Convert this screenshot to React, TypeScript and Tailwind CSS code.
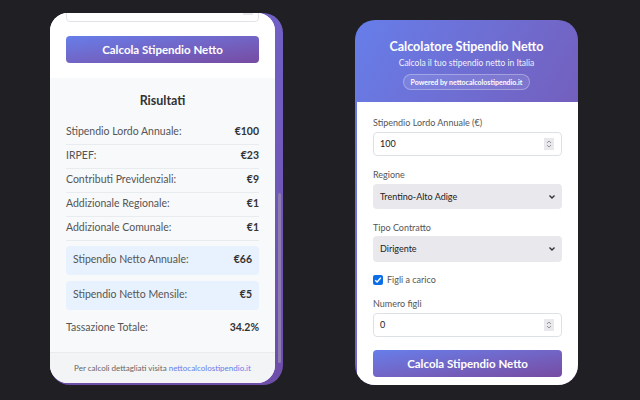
import React from 'react'

const font = { fontFamily: 'Lato, "Noto Sans", sans-serif' }

const rows = [
   { label: 'Stipendio Lordo Annuale:', value: '€100' },
   { label: 'IRPEF:', value: '€23' },
   { label: 'Contributi Previdenziali:', value: '€9' },
   { label: 'Addizionale Regionale:', value: '€1' },
   { label: 'Addizionale Comunale:', value: '€1' },
]

const Spinner = () => (
   <div className="flex h-[12px] w-[10px] flex-col items-center justify-center bg-[#e9e9ed]">
      <svg width="6" height="10" viewBox="0 0 6 10" fill="none" stroke="#8a8a8a" strokeWidth="0.9">
         <path d="M1 4 L3 2 L5 4" />
         <path d="M1 6 L3 8 L5 6" />
      </svg>
   </div>
)

const Chevron = () => (
   <svg width="8" height="6" viewBox="0 0 8 6" fill="none" stroke="#333" strokeWidth="1.4">
      <path d="M1.5 1.5 L4 4 L6.5 1.5" />
   </svg>
)

const GradientButton = ({ className = '' }: { className?: string }) => (
   <div
      className={`flex h-[27px] shrink-0 items-center justify-center rounded-[4px] bg-gradient-to-br from-[#667eea] to-[#764ba2] text-[11.5px] font-bold text-white ${className}`}
   >
      Calcola Stipendio Netto
   </div>
)

const ResultsCard = () => (
   <div className="flex h-[372px] w-[233px] shrink-0 rounded-[20px] bg-gradient-to-b from-[#7160c6] to-[#6d4ea9] pb-[2px]">
      <div className="flex w-[225px] flex-col overflow-hidden rounded-[18px] bg-white">
         <div className="bg-white px-[16px] pb-[15px]">
            <div className="-mt-[17px] flex h-[26px] items-center justify-end rounded-[4px] border border-[#dfe3e8] pr-[5px]">
               <Spinner />
            </div>
            <div className="mt-[14px]">
               <GradientButton />
            </div>
         </div>
         <div className="flex flex-1 flex-col bg-[#f8f9fb] px-[16px] pt-[14px]">
            <div className="text-center text-[12.5px] font-bold text-[#333]">Risultati</div>
            <div className="mt-[10px] flex flex-col">
               {rows.map((r) => (
                  <div
                     key={r.label}
                     className="flex h-[24px] items-center justify-between border-b border-[#e9ecef] text-[10.5px]"
                  >
                     <span className="text-[#555]">{r.label}</span>
                     <span className="font-bold text-[#333]">{r.value}</span>
                  </div>
               ))}
            </div>
            <div className="mt-[5px] flex h-[29px] items-center justify-between rounded-[4px] bg-[#e8f2fe] px-[7px] text-[10.5px]">
               <span className="text-[#555]">Stipendio Netto Annuale:</span>
               <span className="font-bold text-[#333]">€66</span>
            </div>
            <div className="mt-[6px] flex h-[29px] items-center justify-between rounded-[4px] bg-[#e8f2fe] px-[7px] text-[10.5px]">
               <span className="text-[#555]">Stipendio Netto Mensile:</span>
               <span className="font-bold text-[#333]">€5</span>
            </div>
            <div className="mt-[8px] flex h-[20px] items-center justify-between text-[10.5px]">
               <span className="text-[#555]">Tassazione Totale:</span>
               <span className="font-bold text-[#333]">34.2%</span>
            </div>
         </div>
         <div className="flex h-[31px] items-center justify-center border-t border-[#e9ecef] bg-[#f3f4f6] text-[8px] text-[#666]">
            <span>
               Per calcoli dettagliati visita{' '}
               <span className="text-[#667eea]">nettocalcolostipendio.it</span>
            </span>
         </div>
      </div>
      <div className="flex w-[8px] flex-col items-center pt-[180px] pb-[20px]">
         <div className="h-full w-[3px] rounded-full bg-[#8c7bb0]" />
      </div>
   </div>
)

const Label = ({ children, className = '' }: { children: React.ReactNode; className?: string }) => (
   <div className={`h-[12px] text-[9px] leading-[12px] text-[#555] ${className}`}>{children}</div>
)

const CalculatorCard = () => (
   <div className="flex h-[365px] w-[223px] shrink-0 flex-col overflow-hidden rounded-[20px] bg-gradient-to-br from-[#667eea] to-[#764ba2]">
      <div className="flex h-[82px] shrink-0 flex-col items-center pt-[18px] text-white">
         <div className="text-[12.5px] font-bold leading-[18px]">Calcolatore Stipendio Netto</div>
         <div className="mt-[1px] text-[8.5px] leading-[12px] opacity-90">Calcola il tuo stipendio netto in Italia</div>
         <div className="mt-[5px] flex h-[16px] items-center rounded-full border border-white/30 bg-white/10 px-[7px] text-[7px] font-bold">
            Powered by nettocalcolostipendio.it
         </div>
      </div>
      <div className="ml-[2px] flex flex-1 flex-col bg-white px-[16px] pt-[15px]">
         <Label>Stipendio Lordo Annuale (€)</Label>
         <div className="mt-[3px] flex h-[24px] shrink-0 items-center justify-between rounded-[4px] border border-[#dde1e6] pl-[6px] pr-[7px] text-[9px] text-[#222]">
            <span>100</span>
            <Spinner />
         </div>
         <Label className="mt-[13px]">Regione</Label>
         <div className="mt-[3px] flex h-[25px] shrink-0 items-center justify-between rounded-[4px] bg-[#e9e9ed] pl-[7px] pr-[6px] text-[9px] text-[#222]">
            <span>Trentino-Alto Adige</span>
            <Chevron />
         </div>
         <Label className="mt-[13px]">Tipo Contratto</Label>
         <div className="mt-[2px] flex h-[26px] shrink-0 items-center justify-between rounded-[4px] bg-[#e9e9ed] pl-[7px] pr-[6px] text-[9px] text-[#222]">
            <span>Dirigente</span>
            <Chevron />
         </div>
         <div className="mt-[12px] flex h-[12px] items-center gap-[4px]">
            <div className="flex h-[10px] w-[10px] items-center justify-center rounded-[2px] bg-[#0b6ee8]">
               <svg width="8" height="8" viewBox="0 0 8 8" fill="none" stroke="white" strokeWidth="1.4">
                  <path d="M1.2 4.2 L3.1 6 L6.8 1.8" />
               </svg>
            </div>
            <span className="text-[9px] text-[#555]">Figli a carico</span>
         </div>
         <Label className="mt-[12px]">Numero figli</Label>
         <div className="mt-[3px] flex h-[24px] shrink-0 items-center justify-between rounded-[4px] border border-[#dde1e6] pl-[6px] pr-[7px] text-[9px] text-[#222]">
            <span>0</span>
            <Spinner />
         </div>
         <GradientButton className="mt-[13px]" />
      </div>
   </div>
)

export default function App() {
   return (
      <div
         className="flex h-[400px] w-[640px] items-end gap-[72px] overflow-hidden bg-[#1f1f24] pb-[15px] pl-[50px]"
         style={font}
      >
         <ResultsCard />
         <CalculatorCard />
      </div>
   )
}
